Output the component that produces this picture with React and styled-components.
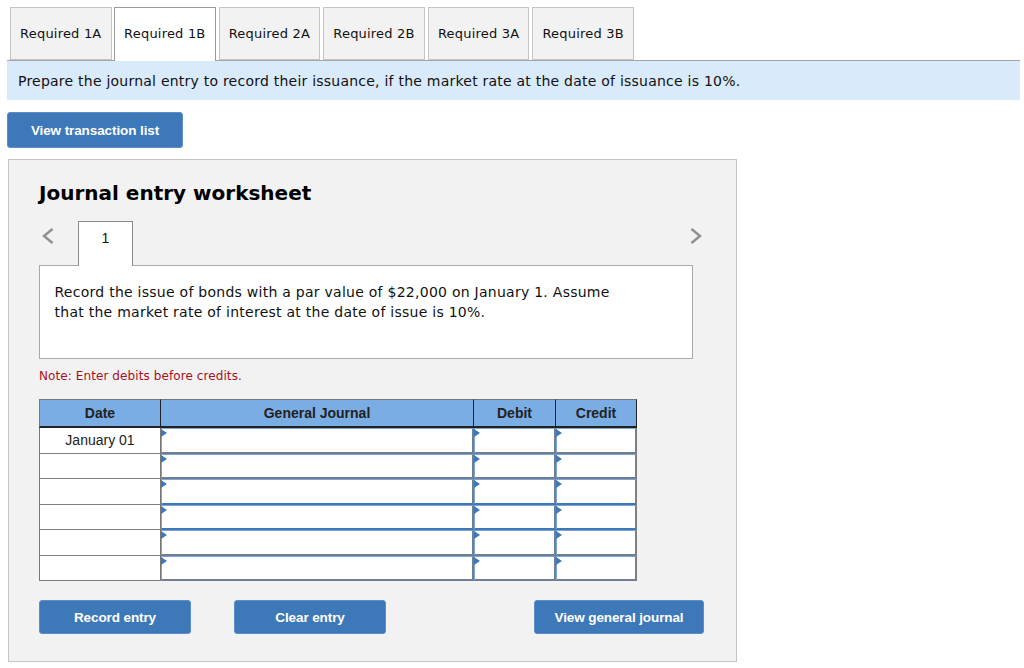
import React from "react";
import styled, { createGlobalStyle } from "styled-components";

const Global = createGlobalStyle`
  html, body { margin: 0; padding: 0; background: #fff; }
  body { font-family: "DejaVu Sans", Verdana, sans-serif; color: #000; }
`;

const Page = styled.div`
  width: 1024px;
  height: 668px;
  padding: 7px 4px 0 7px;
  box-sizing: border-box;
  overflow: hidden;
`;

const TabRow = styled.div`
  display: flex;
  gap: 3px;
  padding-left: 3px;
  height: 54px;
`;

const Tab = styled.div`
  width: 101.6px;
  height: ${p => (p.$active ? "54px" : "53px")};
  box-sizing: border-box;
  border-style: solid;
  border-width: ${p => (p.$active ? "1px 1px 0 1px" : "1px")};
  border-color: ${p => (p.$active ? "#9a9a9a" : "#c4c4c4")};
  background: ${p => (p.$active ? "#fff" : "#f2f2f2")};
  display: flex;
  align-items: center;
  justify-content: center;
  padding-bottom: ${p => (p.$active ? "2px" : "0")};
  margin-left: ${p => (p.$active ? "-0.6px" : "0")};
  font-size: 13px;
  letter-spacing: 0.2px;
  color: #111;
  position: relative;
  z-index: 1;
`;

const Banner = styled.div`
  height: 40px;
  margin-top: -1px;
  border-top: 1px solid #a5a5a5;
  box-sizing: border-box;
  background: #d9eafa;
  display: flex;
  align-items: center;
  padding: 1px 0 0 11px;
  font-size: 14px;
  letter-spacing: 0.23px;
  color: #111;
`;

const Button = styled.button`
  all: unset;
  box-sizing: border-box;
  display: flex;
  align-items: center;
  justify-content: center;
  width: ${p => p.$w}px;
  height: ${p => p.$h}px;
  padding-top: 1px;
  background: #3d78b9;
  border: 1px solid #5b8fca;
  border-radius: 3px;
  color: #fff;
  font-family: "Liberation Sans", Arial, sans-serif;
  font-weight: 700;
  font-size: 13.5px;
  letter-spacing: -0.1px;
`;

const TopAction = styled.div`
  margin: 12px 0 11px;
`;

const Panel = styled.section`
  width: 729px;
  height: 503px;
  margin-left: 1px;
  box-sizing: border-box;
  background: #f2f2f2;
  border: 1px solid #c4c4c4;
  padding: 20px 30px 0;
`;

const Heading = styled.h2`
  margin: 0;
  font-size: 20px;
  line-height: 26px;
  font-weight: 700;
  color: #000;
`;

const PagerRow = styled.div`
  display: flex;
  align-items: flex-start;
  justify-content: space-between;
  width: 654px;
  height: 45px;
  margin-top: 15px;
  position: relative;
`;

const Arrow = styled.svg`
  width: 12px;
  height: 16px;
  margin-top: 7px;
  margin-left: ${p => p.$ml || 0}px;
  margin-right: ${p => p.$mr || 0}px;
  flex: none;
`;

const PagerLeft = styled.div`
  display: flex;
  align-items: flex-start;
`;

const PageTab = styled.div`
  width: 55px;
  height: 45px;
  box-sizing: border-box;
  border: 1px solid #8a8a8a;
  border-bottom: none;
  background: #fff;
  margin-left: 24px;
  display: flex;
  justify-content: center;
  padding-top: 8px;
  font-family: "Liberation Sans", Arial, sans-serif;
  font-size: 14px;
  color: #111;
  position: relative;
  z-index: 1;
`;

const Prompt = styled.div`
  width: 654px;
  height: 94px;
  margin-top: -1px;
  box-sizing: border-box;
  border: 1px solid #a8a8a8;
  background: #fff;
  padding: 16px 14.5px 0;
  font-size: 14px;
  letter-spacing: 0.26px;
  line-height: 20px;
  color: #111;
`;

const Note = styled.div`
  margin-top: 9px;
  font-size: 12px;
  letter-spacing: 0.09px;
  line-height: 16px;
  color: #a8101a;
`;

const Journal = styled.div`
  width: 598px;
  margin-top: 15px;
  display: grid;
  grid-template-columns: 122px 313px 82px 81px;
  grid-auto-rows: 25.5px;
  grid-template-rows: 29px;
  font-family: "Liberation Sans", Arial, sans-serif;
  font-size: 14px;
  color: #222;
`;

const HeadCell = styled.div`
  background: #7aade3;
  box-sizing: border-box;
  border-top: 1px solid #777;
  border-bottom: 2px solid #222;
  border-left: ${p => (p.$first ? "1px solid #777" : "none")};
  border-right: 1px solid #222;
  display: flex;
  align-items: center;
  justify-content: center;
  font-weight: 700;
`;

const DateCell = styled.div`
  background: #fff;
  box-sizing: border-box;
  border-left: 1px solid #777;
  border-right: 1px solid #777;
  border-bottom: 1px solid #808080;
  display: flex;
  align-items: center;
  justify-content: center;
`;

const InputCell = styled.div`
  background: #fff;
  box-sizing: border-box;
  border: 1px solid #7aa5d6;
  border-bottom: 2px solid ${p => (p.$strong ? "#3d78b9" : "#6f7f90")};
  border-right: ${p => (p.$last ? "2px solid #7f7f7f" : "2px solid #6f7f90")};
  position: relative;
  &::before {
    content: "";
    position: absolute;
    left: -1px;
    top: 0;
    border-left: 6px solid #3d78b9;
    border-top: 4px solid transparent;
    border-bottom: 4px solid transparent;
  }
`;

const Actions = styled.div`
  display: flex;
  margin-top: 19px;
  width: 665px;
`;

const Spacer = styled.div`
  width: ${p => p.$w}px;
  flex: none;
`;

const tabs = ["Required 1A", "Required 1B", "Required 2A", "Required 2B", "Required 3A", "Required 3B"];
const rows = [
  { date: "January 01", strong: false },
  { date: "", strong: false },
  { date: "", strong: true },
  { date: "", strong: true },
  { date: "", strong: false },
  { date: "", strong: false },
];

export default function App() {
  return (
    <Page>
      <Global />
      <TabRow>
        {tabs.map((t, i) => (
          <Tab key={t} $active={i === 1}>{t}</Tab>
        ))}
      </TabRow>
      <Banner>Prepare the journal entry to record their issuance, if the market rate at the date of issuance is 10%.</Banner>
      <TopAction>
        <Button $w={176} $h={36}>View transaction list</Button>
      </TopAction>
      <Panel>
        <Heading>Journal entry worksheet</Heading>
        <PagerRow>
          <PagerLeft>
            <Arrow $ml={3} viewBox="0 0 12 16">
              <path d="M10.5 1 L2 8 L10.5 15" fill="none" stroke="#8f8f8f" strokeWidth="2.4" />
            </Arrow>
            <PageTab>1</PageTab>
          </PagerLeft>
          <Arrow $mr={-9} viewBox="0 0 12 16">
            <path d="M1.5 1 L10 8 L1.5 15" fill="none" stroke="#8f8f8f" strokeWidth="2.4" />
          </Arrow>
        </PagerRow>
        <Prompt>
          Record the issue of bonds with a par value of $22,000 on January 1. Assume<br />
          that the market rate of interest at the date of issue is 10%.
        </Prompt>
        <Note>Note: Enter debits before credits.</Note>
        <Journal>
          <HeadCell $first>Date</HeadCell>
          <HeadCell>General Journal</HeadCell>
          <HeadCell>Debit</HeadCell>
          <HeadCell>Credit</HeadCell>
          {rows.map((r, i) => (
            <React.Fragment key={i}>
              <DateCell>{r.date}</DateCell>
              <InputCell $strong={r.strong} />
              <InputCell $strong={r.strong} />
              <InputCell $strong={r.strong} $last />
            </React.Fragment>
          ))}
        </Journal>
        <Actions>
          <Button $w={152} $h={34}>Record entry</Button>
          <Spacer $w={43} />
          <Button $w={152} $h={34}>Clear entry</Button>
          <Spacer $w={148} />
          <Button $w={170} $h={34}>View general journal</Button>
        </Actions>
      </Panel>
    </Page>
  );
}
